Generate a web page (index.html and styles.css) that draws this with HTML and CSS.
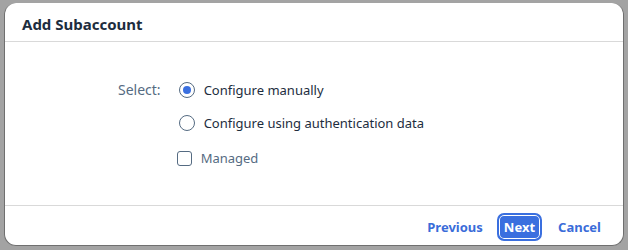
FILE: index.html
```html
<!DOCTYPE html>
<html lang="en">
<head>
    <meta charset="UTF-8">
    <title>Add Subaccount</title>
    <link rel="stylesheet" href="styles.css">
</head>
<body>
    <div class="dialog">
        <div class="dialog-header">Add Subaccount</div>

        <div class="dialog-body">
            <div class="field-label">Select:</div>
            <div class="options">
                <div class="option">
                    <span class="radio checked"></span>
                    <span>Configure manually</span>
                </div>
                <div class="option">
                    <span class="radio"></span>
                    <span>Configure using authentication data</span>
                </div>
                <div class="option managed">
                    <span class="checkbox"></span>
                    <span>Managed</span>
                </div>
            </div>
        </div>

        <div class="dialog-footer">
            <button class="link-btn">Previous</button>
            <button class="primary-btn">Next</button>
            <button class="link-btn">Cancel</button>
        </div>
    </div>
</body>
</html>
```

FILE: styles.css
```css
body {
    margin: 0;
    padding: 3px 4px 4px 4px;
    background-color: #a3a3a3;
    font-family: "Noto Sans", "Open Sans", Arial, sans-serif;
    color: #1d2d3e;
}
.dialog {
    height: 243px;
    box-sizing: border-box;
    background-color: #fff;
    border-left: 1px solid #6f6f6f;
    border-right: 1px solid #6f6f6f;
    border-bottom: 1px solid #6f6f6f;
    border-radius: 12px;
    display: flex;
    flex-direction: column;
    overflow: hidden;
}
.dialog-header {
    height: 39px;
    box-sizing: border-box;
    padding: 4px 0 0 17px;
    display: flex;
    align-items: center;
    font-size: 15px;
    font-weight: bold;
    color: #1d2d3e;
    border-bottom: 1px solid #d9d9d9;
}
.dialog-body {
    flex: 1;
    display: flex;
    padding: 39px 0 0 113px;
    font-size: 13px;
}
.field-label {
    color: #556b82;
    font-size: 14px;
    margin-right: 18px;
    line-height: 18px;
}
.options {
    display: flex;
    flex-direction: column;
}
.option {
    display: flex;
    align-items: center;
    height: 18px;
    margin-bottom: 15px;
}
.radio {
    width: 14px;
    height: 14px;
    border: 1px solid #556b82;
    border-radius: 50%;
    margin-right: 9px;
    position: relative;
}
.radio.checked::after {
    content: "";
    position: absolute;
    left: 3px;
    top: 3px;
    width: 8px;
    height: 8px;
    border-radius: 50%;
    background-color: #3a6fdf;
}
.managed {
    margin-top: 2px;
    margin-left: -2px;
    color: #556b82;
}
.checkbox {
    width: 13px;
    height: 13px;
    border: 1px solid #556b82;
    border-radius: 3px;
    margin-right: 9px;
}
.dialog-footer {
    height: 40px;
    box-sizing: border-box;
    padding: 3px 14px 0 0;
    border-top: 1px solid #d9d9d9;
    display: flex;
    align-items: center;
    justify-content: flex-end;
    gap: 8px;
}
button {
    font-family: inherit;
    font-size: 13px;
    font-weight: bold;
    cursor: pointer;
}
.link-btn {
    background: none;
    border: none;
    color: #3a6cd9;
    padding: 4px 8px;
}
.link-btn:first-child {
    padding-right: 6px;
}
.primary-btn {
    background-color: #3a6fdf;
    color: #fff;
    border: 2px solid #3a6fdf;
    box-shadow: inset 0 0 0 1px #fff;
    border-radius: 7px;
    height: 28px;
    padding: 0 5px;
}
```
